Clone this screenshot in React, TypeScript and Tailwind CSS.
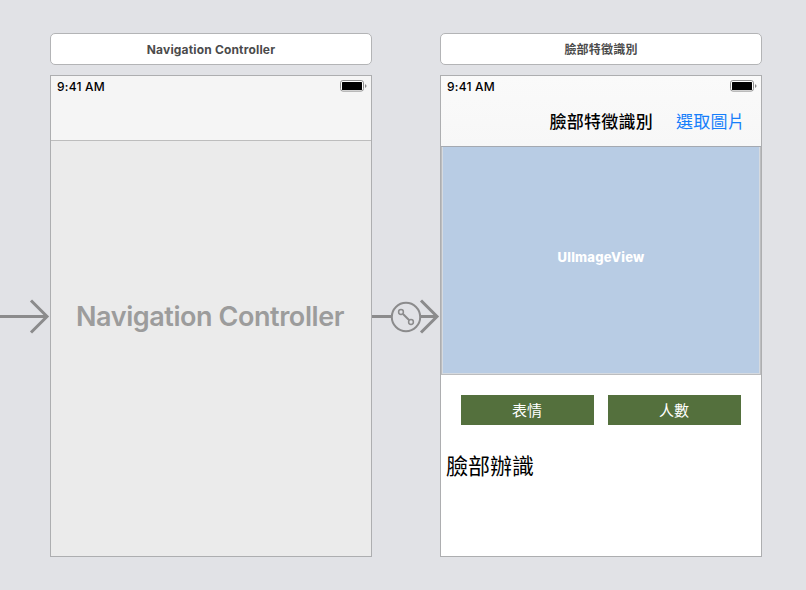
import type { ReactNode } from "react";

function Battery() {
  return (
    <svg width="28" height="12" viewBox="0 0 28 12" fill="none">
      <rect x="0.5" y="0.5" width="23" height="10.6" rx="2.4" fill="#fff" stroke="#909090" />
      <rect x="2" y="2" width="20" height="8" rx="0.5" fill="#000" />
      <path d="M25 4.2v3.6c1-.3 1.5-1 1.5-1.8S26 4.500 25 4.200Z" fill="#888" />
    </svg>
  );
}

function StatusBar() {
  return (
    <div className="flex h-5 shrink-0 items-start justify-between pl-1.5 pr-[3px] pt-1">
      <span className="text-[12px] leading-[14px] font-[450] tracking-[0.22px] text-black">9:41 AM</span>
      <Battery />
    </div>
  );
}

function Scene({ title, children }: { title: ReactNode; children: ReactNode }) {
  return (
    <section className="flex w-[322px] shrink-0 flex-col gap-2.5 pt-[33px]">
      <header className="flex h-8 items-center justify-center rounded-[5px] border border-[#b3b4b6] bg-white pt-0.5 text-[12px] text-[#4b4b4b]">
        {title}
      </header>
      <div className="flex h-[482px] flex-col border border-[#adaeb0] bg-white">{children}</div>
    </section>
  );
}

function EntryArrow() {
  return (
    <svg className="mt-[296px] shrink-0" width="50" height="40" viewBox="0 0 50 40" fill="none" stroke="#8b8b8c" strokeWidth="3">
      <path d="M0 20.500H46" />
      <path d="M31 4.500L47 20.500L31 36.500" />
    </svg>
  );
}

function SegueArrow() {
  return (
    <svg className="mt-[296px] shrink-0" width="68" height="40" viewBox="0 0 68 40" fill="none" stroke="#8b8b8c">
      <path d="M0 20.500H20M48 20.500H64" strokeWidth="3" />
      <path d="M49 4.500L65 20.500L49 36.500" strokeWidth="3" />
      <circle cx="34" cy="21" r="14.200" strokeWidth="2" fill="#e1e2e6" />
      <circle cx="29" cy="16" r="2.400" strokeWidth="1.500" />
      <circle cx="39" cy="26" r="2.400" strokeWidth="1.500" />
      <path d="M31 18L37 24" strokeWidth="2" />
    </svg>
  );
}

function ActionButton({ children }: { children: ReactNode }) {
  return (
    <button className="flex h-[30px] w-[133px] items-center justify-center bg-[#54703d] pr-px pt-px text-[15px] leading-[29px] font-normal text-white">
      {children}
    </button>
  );
}

export default function App() {
  return (
    <main
      lang="zh-Hant"
      className="flex h-[590px] w-[806px] items-start overflow-hidden bg-[#e1e2e6] font-[Inter,'Noto_Sans_CJK_TC',sans-serif]"
    >
      <EntryArrow />
      <Scene title={<span className="font-bold tracking-[0.17px]">Navigation Controller</span>}>
        <div className="h-[65px] shrink-0 border-b border-[#bdbdbd] bg-[#f5f5f5]">
          <StatusBar />
        </div>
        <div className="flex flex-1 justify-center bg-[#ebebeb] pr-0.5 pt-[158px]">
          <span className="text-[27px] leading-9 font-semibold tracking-[-0.43px] whitespace-nowrap text-[#9c9c9c]">
            Navigation Controller
          </span>
        </div>
      </Scene>
      <SegueArrow />
      <Scene title={<span className="font-bold tracking-[0.2px]">臉部特徵識別</span>}>
        <div className="h-[71px] shrink-0 border-b border-[#a4a9b1] bg-gradient-to-b from-[#fafafa] to-[#f7f7f7]">
          <StatusBar />
          <div className="flex h-[50px] items-center justify-end gap-[23px] pr-4 pt-px text-[17px] leading-6 tracking-[0.25px]">
            <h1 className="font-medium text-black">臉部特徵識別</h1>
            <button className="font-normal text-[#157efb]">選取圖片</button>
          </div>
        </div>
        <div className="flex h-[228px] shrink-0 border-x border-b border-[#bcbdbf]">
          <div className="flex flex-1 items-center justify-center border-x border-b border-[#d5dae0] bg-[#b8cce4] pb-1 text-[13px] font-extrabold tracking-[0.23px] text-white">
            <span>UIImageView</span>
          </div>
        </div>
        <div className="flex gap-3.5 px-5 pt-5">
          <ActionButton>表情</ActionButton>
          <ActionButton>人數</ActionButton>
        </div>
        <p className="pl-[5px] pt-[25px] text-[22px] leading-8 font-normal text-black">臉部辦識</p>
      </Scene>
    </main>
  );
}
